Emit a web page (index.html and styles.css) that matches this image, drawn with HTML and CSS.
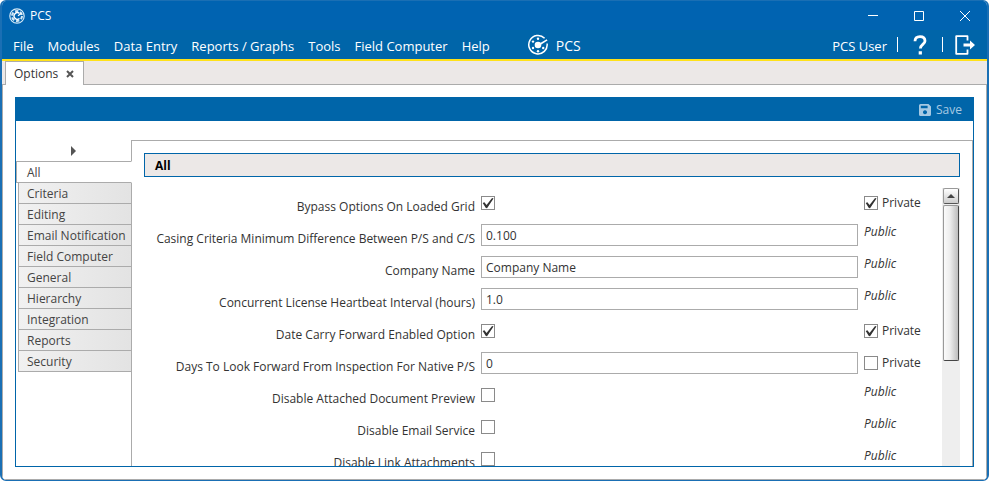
FILE: index.html
```html
<!DOCTYPE html>
<html lang="en">
<head>
<meta charset="utf-8">
<title>PCS</title>
<link rel="stylesheet" href="styles.css">
</head>
<body>
<div class="window">
  <header class="titlebar">
    <svg class="app-icon" viewBox="0 0 16 16" aria-hidden="true">
      <circle cx="8" cy="8" r="7.200" fill="none" stroke="#d3e8f6" stroke-width="1.200"/>
      <circle cx="8" cy="8" r="5" fill="none" stroke="#d3e8f6" stroke-width="2" stroke-dasharray="3.400 1.836"/>
      <path d="M10.500 5.500A3.300 3.300 0 1 0 10.500 10.500" fill="none" stroke="#fff" stroke-width="1.300"/>
      <path d="M9 7.800l3.500-2.500" stroke="#fff" stroke-width="1.300"/>
    </svg>
    <span class="title">PCS</span>
    <div class="window-buttons">
      <button type="button" aria-label="Minimize"><svg viewBox="0 0 12 12"><path d="M1 5.500h10"/></svg></button>
      <button type="button" aria-label="Maximize"><svg viewBox="0 0 12 12"><path d="M1.500 1.500h9v9h-9z"/></svg></button>
      <button type="button" aria-label="Close"><svg viewBox="0 0 12 12"><path d="M1 1l10 10M11 1L1 11"/></svg></button>
    </div>
  </header>
  <nav class="menubar">
    <div class="menus">
      <button type="button">File</button>
      <button type="button">Modules</button>
      <button type="button">Data Entry</button>
      <button type="button">Reports / Graphs</button>
      <button type="button">Tools</button>
      <button type="button">Field Computer</button>
      <button type="button">Help</button>
    </div>
    <div class="brand">
      <svg viewBox="0 0 22 22" aria-hidden="true">
        <path d="M17.600 4.300A9.200 9.200 0 1 0 20.100 9.500" fill="none" stroke="#fff" stroke-width="1.500"/>
        <circle cx="11" cy="11" r="3.300" fill="#fff"/>
        <path d="M12 9.800L19.700 5.200l.8 1.300-7.500 4.800z" fill="#fff"/>
        <g fill="#fff">
          <circle cx="11" cy="4.800" r="1.200"/><circle cx="6" cy="7.600" r="1.200"/><circle cx="6" cy="14" r="1.200"/>
          <circle cx="11" cy="17.200" r="1.200"/><circle cx="16.200" cy="14" r="1.200"/>
        </g>
      </svg>
      <span>PCS</span>
    </div>
    <div class="user-tools">
      <span class="user">PCS User</span>
      <span class="rule"></span>
      <button type="button" aria-label="Help">
        <svg class="help-icon" viewBox="0 0 14 20"><path d="M2 6.200C2 3.300 4 1.600 7 1.600s5 1.700 5 4.300c0 3.400-4.600 3.700-4.600 7.600" fill="none" stroke="#fff" stroke-width="2.800"/><path d="M5.700 16.200h3.200v3.200H5.700z" fill="#fff"/></svg>
      </button>
      <span class="rule"></span>
      <button type="button" aria-label="Log out">
        <svg class="exit-icon" viewBox="0 0 20 20"><path d="M12.500 5.500V1.200H1.200v17.600h11.300V14.500" fill="none" stroke="#fff" stroke-width="1.800" stroke-linejoin="round"/><path d="M8.500 8.500h6.500V5.500l5 4.500-5 4.500v-3H8.500z" fill="#fff"/></svg>
      </button>
    </div>
  </nav>
  <div class="tabstrip">
    <div class="doc-tab"><span>Options</span>
      <button type="button" aria-label="Close tab"><svg viewBox="0 0 8 8"><path d="M1 1l6 6M7 1L1 7"/></svg></button>
    </div>
  </div>
  <main class="workspace">
    <section class="panel">
      <div class="toolbar">
        <button type="button" class="save" disabled>
          <svg viewBox="0 0 12 12" aria-hidden="true"><path fill-rule="evenodd" d="M1.500 0H9.500L12 2.500V10.500Q12 12 10.500 12H1.500Q0 12 0 10.500V1.500Q0 0 1.500 0zM1.800 1.700V4.300H8.600V1.700zM6 6.300a2 2 0 1 0 .01 0z"/></svg>
          <span>Save</span>
        </button>
      </div>
      <div class="panel-body">
        <nav class="sidebar">
          <button type="button" class="expander" aria-label="Expand"><svg viewBox="0 0 5 10"><path d="M0 0l5 5-5 5z"/></svg></button>
          <a href="#all" class="category selected">All</a>
          <a href="#criteria" class="category">Criteria</a>
          <a href="#editing" class="category">Editing</a>
          <a href="#email" class="category">Email Notification</a>
          <a href="#field" class="category">Field Computer</a>
          <a href="#general" class="category">General</a>
          <a href="#hierarchy" class="category">Hierarchy</a>
          <a href="#integration" class="category">Integration</a>
          <a href="#reports" class="category">Reports</a>
          <a href="#security" class="category">Security</a>
        </nav>
        <div class="content">
          <h1>All</h1>
          <div class="scroller">
            <form class="options">
              <div class="row"><label class="name" for="o1">Bypass Options On Loaded Grid</label><input type="checkbox" id="o1" checked><label class="private"><input type="checkbox" checked>Private</label></div>
              <div class="row"><label class="name" for="o2">Casing Criteria Minimum Difference Between P/S and C/S</label><input type="text" id="o2" value="0.100"><em>Public</em></div>
              <div class="row"><label class="name" for="o3">Company Name</label><input type="text" id="o3" value="Company Name"><em>Public</em></div>
              <div class="row"><label class="name" for="o4">Concurrent License Heartbeat Interval (hours)</label><input type="text" id="o4" value="1.0"><em>Public</em></div>
              <div class="row"><label class="name" for="o5">Date Carry Forward Enabled Option</label><input type="checkbox" id="o5" checked><label class="private"><input type="checkbox" checked>Private</label></div>
              <div class="row"><label class="name" for="o6">Days To Look Forward From Inspection For Native P/S</label><input type="text" id="o6" value="0"><label class="private"><input type="checkbox">Private</label></div>
              <div class="row"><label class="name" for="o7">Disable Attached Document Preview</label><input type="checkbox" id="o7"><em>Public</em></div>
              <div class="row"><label class="name" for="o8">Disable Email Service</label><input type="checkbox" id="o8"><em>Public</em></div>
              <div class="row"><label class="name" for="o9">Disable Link Attachments</label><input type="checkbox" id="o9"><em>Public</em></div>
            </form>
            <div class="scrollbar">
              <button type="button" aria-label="Scroll up"><svg viewBox="0 0 8 4"><path d="M0 4l4-4 4 4z"/></svg></button>
              <div class="thumb"></div>
            </div>
          </div>
        </div>
      </div>
    </section>
  </main>
</div>
</body>
</html>
```

FILE: styles.css
```css
* { box-sizing: border-box; }

body {
  margin: 0;
  background: #fff;
  color: #333;
  font: 12px/16px "Open Sans", "Noto Sans", sans-serif;
}

button, input { font: inherit; color: inherit; }
button { padding: 0; border: 0; background: none; }
svg { display: block; }

.window {
  display: flex;
  flex-direction: column;
  height: 100vh;
  border: 1px solid #1a6fb4;
  border-width: 1px 2px;
  border-radius: 6px;
  overflow: hidden;
}

.titlebar {
  display: flex;
  align-items: center;
  flex: none;
  height: 29px;
  padding-left: 7px;
  background: #0063b1;
  color: #fff;
}
.app-icon { width: 16px; height: 16px; margin-right: 5px; }
.window-buttons { display: flex; margin-left: auto; }
.window-buttons button { display: grid; place-items: center; width: 46px; height: 28px; padding-left: 2px; }
.window-buttons svg { width: 12px; height: 12px; fill: none; stroke: #fff; }

.menubar {
  display: flex;
  align-items: center;
  flex: none;
  height: 31px;
  padding: 0 12px 0 11px;
  border-bottom: 2px solid #ffe119;
  background: #0065a9;
  color: #fff;
  font-size: 13px;
  line-height: 18px;
}
.menus { display: flex; gap: 14px; padding-top: 2px; }
.user { padding-top: 2px; }
.brand { display: flex; align-items: center; gap: 7px; margin-left: 37px; font-size: 14px; }
.brand svg { width: 22px; height: 22px; }
.brand span { padding-top: 2px; }
.user-tools { display: flex; align-items: center; margin-left: auto; gap: 10px; }
.rule { width: 1px; height: 15px; background: #fff; }
.help-icon { width: 14px; height: 20px; margin: 0 5px; }
.exit-icon { width: 20px; height: 20px; margin-left: 2px; }

.tabstrip {
  display: flex;
  flex: none;
  height: 24px;
  padding-left: 3px;
  border-bottom: 1px solid #ababab;
  background: #ece8e7;
}
.doc-tab {
  display: flex;
  align-items: center;
  gap: 8px;
  height: 24px;
  padding: 0 9px 0 8px;
  border: 1px solid #ababab;
  border-bottom: 0;
  background: #fff;
}
.doc-tab svg { width: 8px; height: 8px; stroke: #555; stroke-width: 2; }

.workspace {
  display: flex;
  flex: 1;
  min-height: 0;
  padding: 12px 12px;
  border: 1px solid #ababab;
  border-top: 0;
}
.panel {
  display: flex;
  flex-direction: column;
  flex: 1;
  border: 1px solid #0065a9;
}
.toolbar {
  display: flex;
  justify-content: flex-end;
  align-items: center;
  flex: none;
  height: 23px;
  padding-right: 11px;
  background: #0065a9;
}
.save { display: flex; align-items: center; gap: 5px; color: #a6c9e3; }
.save svg { width: 12px; height: 12px; fill: currentColor; }

.panel-body { display: flex; flex: 1; min-height: 0; padding-top: 19px; }

.sidebar { flex: none; width: 116px; z-index: 1; }
.expander { display: block; height: 21px; padding-left: 55px; }
.expander svg { width: 5px; height: 10px; fill: #555; }
.category {
  display: block;
  height: 21px;
  margin-left: 2px;
  padding: 3px 0 0 8px;
  border: 1px solid #ababab;
  border-top: 0;
  background: linear-gradient(to right, #f1f1f1, #e3e3e3);
  color: #444;
  text-decoration: none;
  white-space: nowrap;
}
.category.selected {
  height: 22px;
  margin-left: 0;
  padding-left: 10px;
  border-top: 1px solid #ababab;
  border-right-color: #fff;
  background: #fff;
}

.content {
  display: flex;
  flex-direction: column;
  flex: 1;
  margin-left: -1px;
  padding: 12px 12px 0;
  border: 1px solid #ababab;
  border-bottom: 0;
}
h1 {
  flex: none;
  height: 24px;
  margin: 0;
  padding: 4px 10px 0;
  border: 1px solid #0065a9;
  background: #ece8e7;
  color: #000;
  font-size: 12px;
}
.scroller { display: flex; flex: 1; min-height: 0; padding-top: 11px; }
.options { flex: 1; padding-top: 3px; overflow: hidden; }
.row {
  display: grid;
  grid-template-columns: 331px 1fr 78px;
  column-gap: 6px;
  height: 32px;
}
.name { padding-top: 8px; text-align: right; white-space: nowrap; }
input[type="text"] {
  width: 100%;
  height: 22px;
  margin: 1px 0 0;
  padding: 0 4px;
  border: 1px solid #ababab;
  background: #fff;
}
input[type="checkbox"] {
  appearance: none;
  display: block;
  width: 14px;
  height: 14px;
  margin: 5px 0 0;
  border: 1px solid #8a8a8a;
  background: #fff;
}
input[type="checkbox"]:checked::before {
  content: "";
  display: block;
  height: 12px;
  background: #333;
  clip-path: polygon(6% 50%, 20% 44%, 38% 66%, 84% 8%, 96% 12%, 42% 94%, 32% 92%);
}
.private { display: flex; gap: 4px; padding-top: 4px; }
.private input[type="checkbox"] { margin-top: 1px; }
em { padding-top: 1px; }

.scrollbar { width: 18px; padding: 0 1px; background: #eee; }
.scrollbar button {
  display: grid;
  place-items: center;
  width: 16px;
  height: 16px;
  border: 1px solid #999;
  border-right-color: #555;
  border-bottom-color: #555;
  border-radius: 2px;
  background: linear-gradient(to bottom, #fff, #ccc);
}
.scrollbar svg { width: 8px; height: 4px; fill: #444; }
.thumb {
  height: 156px;
  margin-top: 1px;
  border: 1px solid #999;
  border-right-color: #444;
  border-bottom-color: #444;
  border-radius: 2px;
  background: linear-gradient(to right, #fafafa, #ececec 45%, #bdbdbd);
}
```
